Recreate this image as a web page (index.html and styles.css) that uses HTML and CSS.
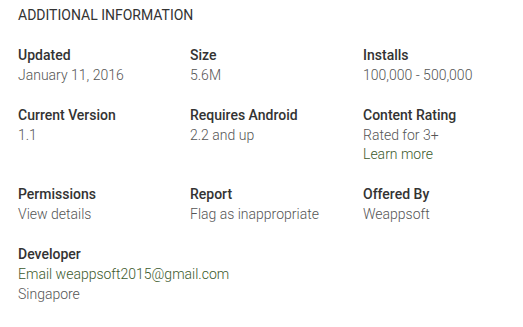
FILE: index.html
```html
<!DOCTYPE html>
<html lang="en">
<head>
  <meta charset="UTF-8">
  <title>Additional Information</title>
  <link rel="stylesheet" href="styles.css">
</head>
<body>
  <div class="details">
    <h2 class="heading">Additional information</h2>

    <div class="grid">
      <div class="item">
        <div class="title">Updated</div>
        <div class="content">January 11, 2016</div>
      </div>
      <div class="item">
        <div class="title">Size</div>
        <div class="content">5.6M</div>
      </div>
      <div class="item">
        <div class="title">Installs</div>
        <div class="content">100,000 - 500,000</div>
      </div>

      <div class="item">
        <div class="title">Current Version</div>
        <div class="content">1.1</div>
      </div>
      <div class="item">
        <div class="title">Requires Android</div>
        <div class="content">2.2 and up</div>
      </div>
      <div class="item">
        <div class="title">Content Rating</div>
        <div class="content">Rated for 3+</div>
        <a class="link last" href="#">Learn more</a>
      </div>

      <div class="item">
        <div class="title">Permissions</div>
        <a class="content" href="#">View details</a>
      </div>
      <div class="item">
        <div class="title">Report</div>
        <a class="content" href="#">Flag as inappropriate</a>
      </div>
      <div class="item">
        <div class="title">Offered By</div>
        <div class="content">Weappsoft</div>
      </div>

      <div class="item wide">
        <div class="title">Developer</div>
        <a class="link" href="#">Email weappsoft2015@gmail.com</a>
        <div class="content">Singapore</div>
      </div>
    </div>
  </div>
</body>
</html>
```

FILE: styles.css
```css
body {
  font-family: Roboto, Arial, sans-serif;
  background-color: #ffffff;
  margin: 0;
  padding: 5px 18px;
}
.heading {
  margin: 0;
  font-size: 14px;
  font-weight: 400;
  line-height: 20px;
  text-transform: uppercase;
  color: #333333;
}
.grid {
  display: grid;
  grid-template-columns: 172px 173px 1fr;
  row-gap: 20px;
  margin-top: 20px;
}
.item {
  display: flex;
  flex-direction: column;
  align-items: flex-start;
  white-space: nowrap;
}
.wide {
  grid-column: span 2;
}
.title {
  font-size: 14px;
  font-weight: 500;
  line-height: 20px;
  color: #333333;
}
.content {
  font-size: 14px;
  font-weight: 300;
  line-height: 20px;
  color: #555555;
  text-decoration: none;
}
.link {
  font-size: 14px;
  font-weight: 300;
  line-height: 20px;
  color: #3b5a2c;
  text-decoration: none;
}
.last {
  line-height: 19px;
}
```
